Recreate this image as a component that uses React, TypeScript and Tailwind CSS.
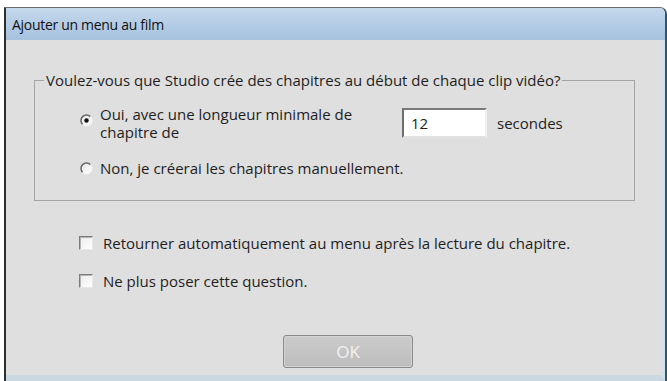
import React from "react";

const FONT = { fontFamily: '"Open Sans", "Noto Sans", "DejaVu Sans", sans-serif' };

function Radio({ checked }: { checked?: boolean }) {
  return (
    <svg width="13" height="13" viewBox="0 0 13 13" className="shrink-0">
      <defs>
        <linearGradient id={checked ? "rg1" : "rg2"} x1="0" y1="0" x2="1" y2="1">
          <stop offset="0" stopColor="#e6e6e6" />
          <stop offset="1" stopColor="#ffffff" />
        </linearGradient>
      </defs>
      <circle cx="6.5" cy="6.5" r="5.5" fill={`url(#${checked ? "rg1" : "rg2"})`} />
      <path d="M10.4 2.6 A5.5 5.5 0 0 0 2.6 10.4" fill="none" stroke="#666" strokeWidth="1.5" />
      <path d="M2.6 10.4 A5.5 5.5 0 0 0 10.4 2.6" fill="none" stroke="#f2f2f2" strokeWidth="1.2" />
      {checked && <circle cx="6.5" cy="6.5" r="2.2" fill="#111" />}
    </svg>
  );
}

function Checkbox() {
  return (
    <div className="w-[14px] h-[14px] shrink-0 border border-t-[#7c7c7c] border-l-[#7c7c7c] border-r-[#e8e8e8] border-b-[#e8e8e8] bg-gradient-to-br from-[#ececec] to-white shadow-[inset_1px_1px_0_#b5b5b5]" />
  );
}

export default function App() {
  return (
    <div className="w-[667px] h-[381px] bg-white overflow-hidden pt-[7px] pl-[4px]" style={FONT}>
      <div className="h-[374px] flex flex-col border-l-2 border-l-[#2e2e2e] border-t border-t-[#6a6a6a] border-r-2 border-r-[#2f5670] rounded-tr-[7px] overflow-hidden">
        <div className="h-[32px] shrink-0 flex items-center pl-[6px] bg-gradient-to-b from-[#c4d8ec] to-[#a6c2df] text-[14px] tracking-[-0.3px] text-[#111]">
          Ajouter un menu au film
        </div>
        <div className="flex-1 flex flex-col bg-[#dfdfdf] border-r-[4px] border-r-[#d3e2ea] border-b-[6px] border-b-[#cad8e2] pl-[28px] text-[15px] text-[#1e1e1e]">
          <fieldset className="mt-[31px] w-[601px] border border-[#a4a4a4] pb-[23px]">
            <legend className="ml-[9px] px-[2px] leading-[18px]">
              Voulez-vous que Studio crée des chapitres au début de chaque clip vidéo?
            </legend>
            <div className="mt-[16px] flex items-center pl-[45px]">
              <div className="w-[322px] flex items-start gap-[7px]">
                <div className="pt-[9px]">
                  <Radio checked />
                </div>
                <div className="leading-[18px]">
                  Oui, avec une longueur minimale de
                  <br />
                  chapitre de
                </div>
              </div>
              <div className="w-[85px] h-[30px] flex items-center pl-[7px] bg-white border-2 border-t-[#7a7a7a] border-l-[#6e6e6e] border-r-[#f0f0f0] border-b-[#e2e2e2]">
                12
              </div>
              <div className="ml-[10px]">secondes</div>
            </div>
            <div className="mt-[18px] flex items-center gap-[7px] pl-[45px] leading-[18px]">
              <Radio />
              <span>Non, je créerai les chapitres manuellement.</span>
            </div>
          </fieldset>
          <div className="mt-[33px] flex items-center gap-[10px] pl-[45px] h-[18px]">
            <Checkbox />
            <span>Retourner automatiquement au menu après la lecture du chapitre.</span>
          </div>
          <div className="mt-[20px] flex items-center gap-[10px] pl-[45px] h-[18px]">
            <Checkbox />
            <span>Ne plus poser cette question.</span>
          </div>
          <div className="mt-[45px] ml-[249px] w-[130px] h-[33px] flex items-center justify-center rounded-[3px] border border-[#8a8a8a] bg-gradient-to-b from-[#cbcbcb] to-[#bdbdbd] text-[#f2f2f2] text-[17px] shadow-[inset_0_0_0_1px_#d2d2d2]">
            OK
          </div>
        </div>
      </div>
    </div>
  );
}
